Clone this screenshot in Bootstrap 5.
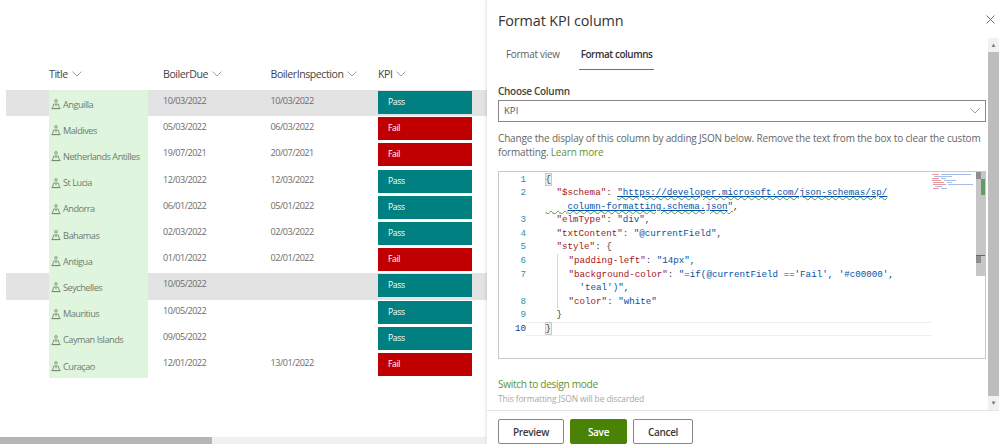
<!DOCTYPE html>
<html lang="en">
<head>
<meta charset="utf-8">
<title>Format KPI column</title>
<link href="https://cdn.jsdelivr.net/npm/bootstrap@5.3.0/dist/css/bootstrap.min.css" rel="stylesheet">
<style>
html,body{height:444px;overflow:hidden;background:#fff}
body{font-family:"Open Sans","Noto Sans",sans-serif;color:#323130}
.stage{width:999px;height:444px}
.listpane{width:487px;height:444px;padding-top:61px}
.headrow{height:27px;margin-bottom:2px;padding-left:49px;font-size:10.6px;letter-spacing:-.45px;color:#444;font-weight:500;align-items:center}
.headrow>div{display:flex;align-items:center;gap:4px}
.chev{width:10px;height:6px;flex:none}
.c1{width:114px;flex:none}.c2{width:107.5px;flex:none}.c3{width:107.5px;flex:none}.c4{width:94px;flex:none}
.listrows{height:347px}
.lrow{height:26.2px;margin-left:6px;padding-left:43px;font-size:9.1px;letter-spacing:-.5px;color:#6d6d6d}
.lrow.hot{background:#e3e3e3}
.lrow .c1{width:99px;margin-right:15px;background:#dff5dd;padding-left:2px;display:flex;align-items:center;gap:2px;padding-top:3px;color:#6f7c6f;font-size:9.2px;letter-spacing:-.5px}
.lrow .c2,.lrow .c3{padding-top:4px}
.lrow .c4{height:23px;margin-top:1px;color:#fff;padding-left:10px;line-height:23px;font-size:8.6px;letter-spacing:-.38px}
.kpass{background:#008080}.kfail{background:#c00000}
.site{width:10px;height:11px;flex:none}
.hscroll{height:7px;background:#f0f0f0;width:486px}
.hthumb{width:212px;height:7px;background:#b6b6b6}
.panel{width:512px;height:444px;box-shadow:-1px 0 3px rgba(0,0,0,.12)}
.ptitle{font-size:14.4px;height:38px;padding:11px 0 0 11px;font-weight:500;color:#333;line-height:20px;letter-spacing:-.12px}
.xbtn{width:9px;height:9px;margin:15px 4px 0 0;flex:none}
.pbody{height:372px}
.pmain{width:501px;padding-left:11px}
.vscroll{width:11px;background:#f1f1f1}
.arrowbox{height:14px;font-size:6px;line-height:14px;text-align:center;color:#777}
.vthumb{flex:1;background:#bdbdbd}
.tabset{height:32px;font-size:9.9px;letter-spacing:-.25px;gap:21px;padding-left:8px;padding-top:9px}
.tabset span{display:block;color:#605e5c}
.tabset .on{color:#333;font-weight:600;letter-spacing:-.42px;position:relative}
.tabset .on::after{content:"";display:block;height:1.5px;background:#5c8a22;margin:7px -2px 0}
.lbl{font-size:10px;letter-spacing:-.3px;font-weight:600;color:#444;margin-top:14px;height:16px;line-height:14px}
.ddl{width:488px;height:22px;border:1px solid #8a8886;font-size:9.6px;padding:0 5px;color:#555;align-items:center}
.hlp{font-size:10px;letter-spacing:-.16px;line-height:14px;color:#666;width:488px;margin-top:9px;height:40px;white-space:nowrap}
.grn{color:#5f9130}
.edit{width:488px;height:188px;border:1px solid #c8c8c8}
.gut{width:27px;flex:none;color:#2b91af;text-align:right;padding-top:.5px}
.gut div,.codec div{height:13.6px;line-height:13.6px}
.gut .cur{color:#1b3a7a}
.mono{font-family:"Liberation Mono",monospace;font-size:9.2px;letter-spacing:0}
.codec{width:405px;flex:none;padding-left:19.5px;padding-top:.5px;color:#0451a5}
.codec div{white-space:pre}
.codec .k{color:#a31515}.codec .p{color:#444}
.lnk{text-decoration:underline;text-decoration-color:#0451a5;text-decoration-thickness:1px;text-underline-offset:1px}
.squig{text-decoration:underline wavy #4b9a3c;text-decoration-thickness:1px;text-underline-offset:1px}
.codec .curl{border-top:1px solid #ececec;border-bottom:1px solid #ececec;margin-left:-19.5px;padding-left:19.5px;height:14px;line-height:12px}
.codec .guide{border-left:1px solid #d5d5d5;margin-left:11px}
.brk{background:#e9efe9;outline:1px solid #c5cdc5}
.mini{width:43px;height:24px;flex:none}
.escroll{width:9px;flex:none;margin-left:2px}
.estrack{height:104px;background:#c6c6c6;position:relative}
.mk{position:absolute;display:block}
.mk1{left:0;top:0;width:5px;height:7px;background:#8e8e8e}
.mk2{left:5px;top:7px;width:4px;height:16px;background:#5f9f63}
.mk3{left:0;top:83px;width:9px;height:1px;background:#666}
.mk4{left:0;top:84px;width:5px;height:7px;background:#8e8e8e}
.switchl{font-size:10.2px;letter-spacing:-.35px;color:#5f9130;margin-top:18px;height:15px;line-height:15px}
.disc{font-size:8.5px;letter-spacing:-.13px;color:#a8a8a8;height:14px;line-height:14px}
.pfoot{height:34px;border-top:1px solid #e3e3e3;padding:8px 0 0 11px;gap:6px}
.pfoot .btn{height:25px;font-size:10px;font-weight:600;padding:0;border-radius:2px;line-height:22px;letter-spacing:-.3px}
.bw{background:#fff;border:1px solid #8a8886;color:#3a3a3a}
.bp{width:66px}.bc{width:60px}
.bs{width:57px;background:#498205;border:1px solid #498205;color:#fff}
.bs:hover{background:#498205;color:#fff}
</style>
</head>
<body>
<div class="stage d-flex">
  <div class="listpane d-flex flex-column">
    <div class="headrow d-flex">
      <div class="c1">Title <svg class="chev" viewBox="0 0 10 6"><path d="M.5.5 5 5 9.5.5" fill="none" stroke="#888" stroke-width=".8"/></svg></div>
      <div class="c2">BoilerDue <svg class="chev" viewBox="0 0 10 6"><path d="M.5.5 5 5 9.5.5" fill="none" stroke="#888" stroke-width=".8"/></svg></div>
      <div class="c3">BoilerInspection <svg class="chev" viewBox="0 0 10 6"><path d="M.5.5 5 5 9.5.5" fill="none" stroke="#888" stroke-width=".8"/></svg></div>
      <div class="c4">KPI <svg class="chev" viewBox="0 0 10 6"><path d="M.5.5 5 5 9.5.5" fill="none" stroke="#888" stroke-width=".8"/></svg></div>
    </div>
    <div class="listrows" id="rows"></div>
    <div class="hscroll"><div class="hthumb"></div></div>
  </div>
  <div class="panel d-flex flex-column">
    <div class="d-flex justify-content-between">
      <div class="ptitle">Format KPI column</div>
      <svg class="xbtn" viewBox="0 0 9 9"><path d="M.5.5 8.5 8.5M8.5.5 .5 8.5" stroke="#5c8a22" stroke-width="1" fill="none"/></svg>
    </div>
    <div class="pbody d-flex">
      <div class="pmain">
        <div class="tabset d-flex"><span>Format view</span><span class="on">Format columns</span></div>
        <div class="lbl">Choose Column</div>
        <div class="ddl d-flex justify-content-between"><span>KPI</span><svg class="chev" viewBox="0 0 10 6"><path d="M.5.5 5 5 9.5.5" fill="none" stroke="#888" stroke-width=".8"/></svg></div>
        <div class="hlp">Change the display of this column by adding JSON below. Remove the text from the box to clear the custom<br>formatting. <span class="grn">Learn more</span></div>
        <div class="edit d-flex">
          <div class="gut mono">
            <div>1</div><div>2</div><div>&nbsp;</div><div>3</div><div>4</div><div>5</div><div>6</div><div>7</div><div>&nbsp;</div><div>8</div><div>9</div><div class="cur">10</div>
          </div>
          <div class="codec mono">
            <div class="p"><span class="brk">{</span></div>
            <div>  <span class="k">"$schema"</span><span class="p">: </span><span class="squig"><span class="lnk">"https://developer.microsoft.com/json-schemas/sp/</span></span></div>
            <div><span class="squig">    <span class="lnk">column-formatting.schema.json</span>"</span><span class="p">,</span></div>
            <div>  <span class="k">"elmType"</span><span class="p">: </span>"div"<span class="p">,</span></div>
            <div>  <span class="k">"txtContent"</span><span class="p">: </span>"@currentField"<span class="p">,</span></div>
            <div>  <span class="k">"style"</span><span class="p">: {</span></div>
            <div class="guide">  <span class="k">"padding-left"</span><span class="p">: </span>"14px"<span class="p">,</span></div>
            <div class="guide">  <span class="k">"background-color"</span><span class="p">: </span>"=if(@currentField =='Fail', '#c00000',</div>
            <div class="guide">    'teal')"<span class="p">,</span></div>
            <div class="guide">  <span class="k">"color"</span><span class="p">: </span>"white"</div>
            <div class="p">  }</div>
            <div class="p curl"><span class="brk">}</span></div>
          </div>
          <svg class="mini" viewBox="0 0 43 24" aria-hidden="true">
            <g fill="#e79a9a"><rect x="1" y="2" width="7" height="1"/><rect x="1" y="6" width="7" height="1"/><rect x="1" y="8" width="9" height="1"/><rect x="2" y="10" width="11" height="1"/><rect x="2" y="12" width="13" height="1"/><rect x="2" y="16" width="6" height="1"/></g>
            <g fill="#a4bde6"><rect x="10" y="2" width="30" height="1"/><rect x="3" y="4" width="18" height="1"/><rect x="10" y="6" width="5" height="1"/><rect x="13" y="8" width="12" height="1"/><rect x="16" y="10" width="5" height="1"/><rect x="17" y="12" width="25" height="1"/><rect x="4" y="14" width="7" height="1"/><rect x="10" y="16" width="6" height="1"/></g>
          </svg>
          <div class="escroll">
            <div class="estrack"><span class="mk mk1"></span><span class="mk mk2"></span><span class="mk mk3"></span><span class="mk mk4"></span></div>
          </div>
        </div>
        <div class="switchl">Switch to design mode</div>
        <div class="disc">This formatting JSON will be discarded</div>
      </div>
      <div class="vscroll d-flex flex-column">
        <div class="arrowbox">&#9650;</div>
        <div class="vthumb"></div>
        <div class="arrowbox">&#9660;</div>
      </div>
    </div>
    <div class="pfoot d-flex">
      <button class="btn bw bp">Preview</button>
      <button class="btn bs">Save</button>
      <button class="btn bw bc">Cancel</button>
    </div>
  </div>
</div>
<script>
var d=[["Anguilla","10/03/2022","10/03/2022","Pass",1],["Maldives","05/03/2022","06/03/2022","Fail"],["Netherlands Antilles","19/07/2021","20/07/2021","Fail"],["St Lucia","12/03/2022","12/03/2022","Pass"],["Andorra","06/01/2022","05/01/2022","Pass"],["Bahamas","02/03/2022","02/03/2022","Pass"],["Antigua","01/01/2022","02/01/2022","Fail"],["Seychelles","10/05/2022","","Pass",1],["Mauritius","10/05/2022","","Pass"],["Cayman Islands","09/05/2022","","Pass"],["Curaçao","12/01/2022","13/01/2022","Fail"]];
var ic='<svg class="site" viewBox="0 0 11 12"><g fill="none" stroke="#75816f" stroke-width=".9"><circle cx="5.5" cy="2" r="1.4"/><path d="M3 5.5H8L9.5 10.5H1.5Z"/><path d="M0.5 10.5H10.5M5.5 5.5V8"/></g></svg>';
document.getElementById('rows').innerHTML=d.map(function(r){return '<div class="lrow d-flex'+(r[4]?' hot':'')+'"><div class="c1">'+ic+'<span class="text-nowrap">'+r[0]+'</span></div><div class="c2">'+r[1]+'</div><div class="c3">'+r[2]+'</div><div class="c4 '+(r[3]=='Pass'?'kpass':'kfail')+'">'+r[3]+'</div></div>'}).join('');
</script>
<script src="https://cdn.jsdelivr.net/npm/bootstrap@5.3.0/dist/js/bootstrap.bundle.min.js"></script>
</body>
</html>
